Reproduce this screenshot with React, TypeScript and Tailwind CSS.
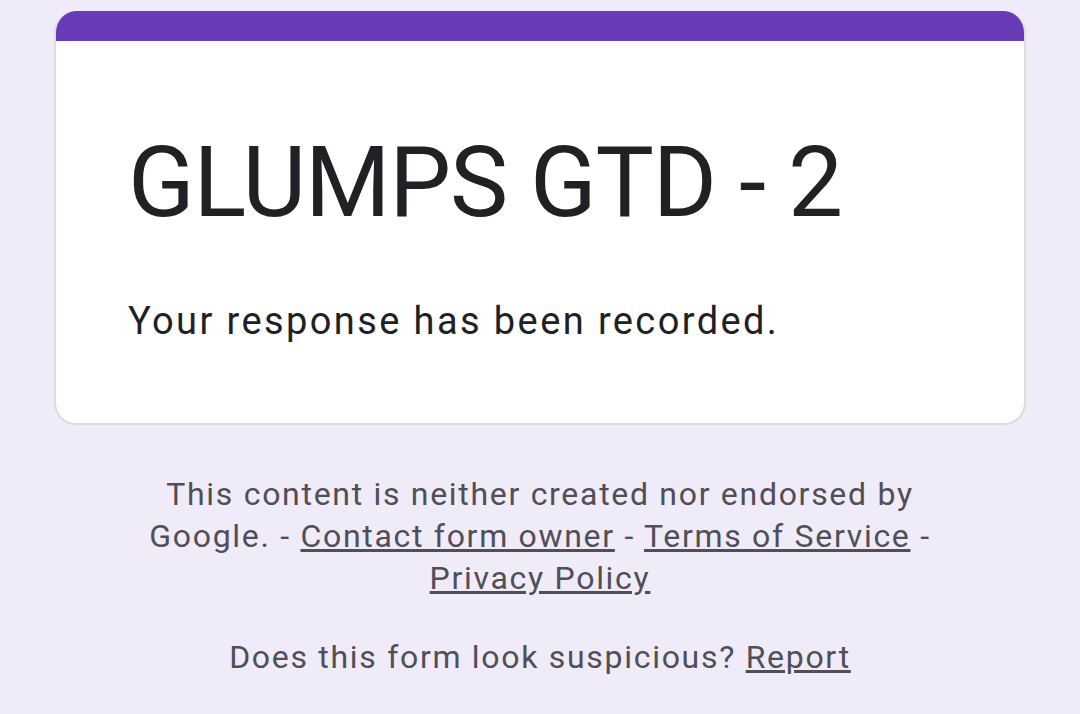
import React from "react";

export default function App() {
  return (
    <div
      className="min-h-[714px] w-full bg-[#efebf8] px-[54px] pt-[11px]"
      style={{ fontFamily: "Roboto, 'Noto Sans', sans-serif" }}
    >
      <div className="overflow-hidden rounded-[22px] border-2 border-t-0 border-[#dadce0] bg-white">
        <div className="-mx-[2px] h-[30px] bg-[#673ab7]" />
        <div className="px-[72px] pb-[80px] pt-[92px]">
          <h1 className="text-[98px] leading-[100px] tracking-[-1.2px] text-[#202124]">GLUMPS GTD - 2</h1>
          <p className="mt-[66px] text-[38px] leading-[44px] tracking-[2.4px] text-[#202124]">
            Your response has been recorded.
          </p>
        </div>
      </div>
      <div className="mx-auto mt-[48px] max-w-[800px] text-center text-[32px] leading-[42px] tracking-[1.7px] text-[#514e57]">
        <p>
          This content is neither created nor endorsed by Google. -{" "}
          <a className="underline">Contact form owner</a> -{" "}
          <a className="underline">Terms of Service</a> -{" "}
          <a className="underline">Privacy Policy</a>
        </p>
        <p className="mt-[37px]">
          Does this form look suspicious? <a className="underline">Report</a>
        </p>
      </div>
    </div>
  );
}
